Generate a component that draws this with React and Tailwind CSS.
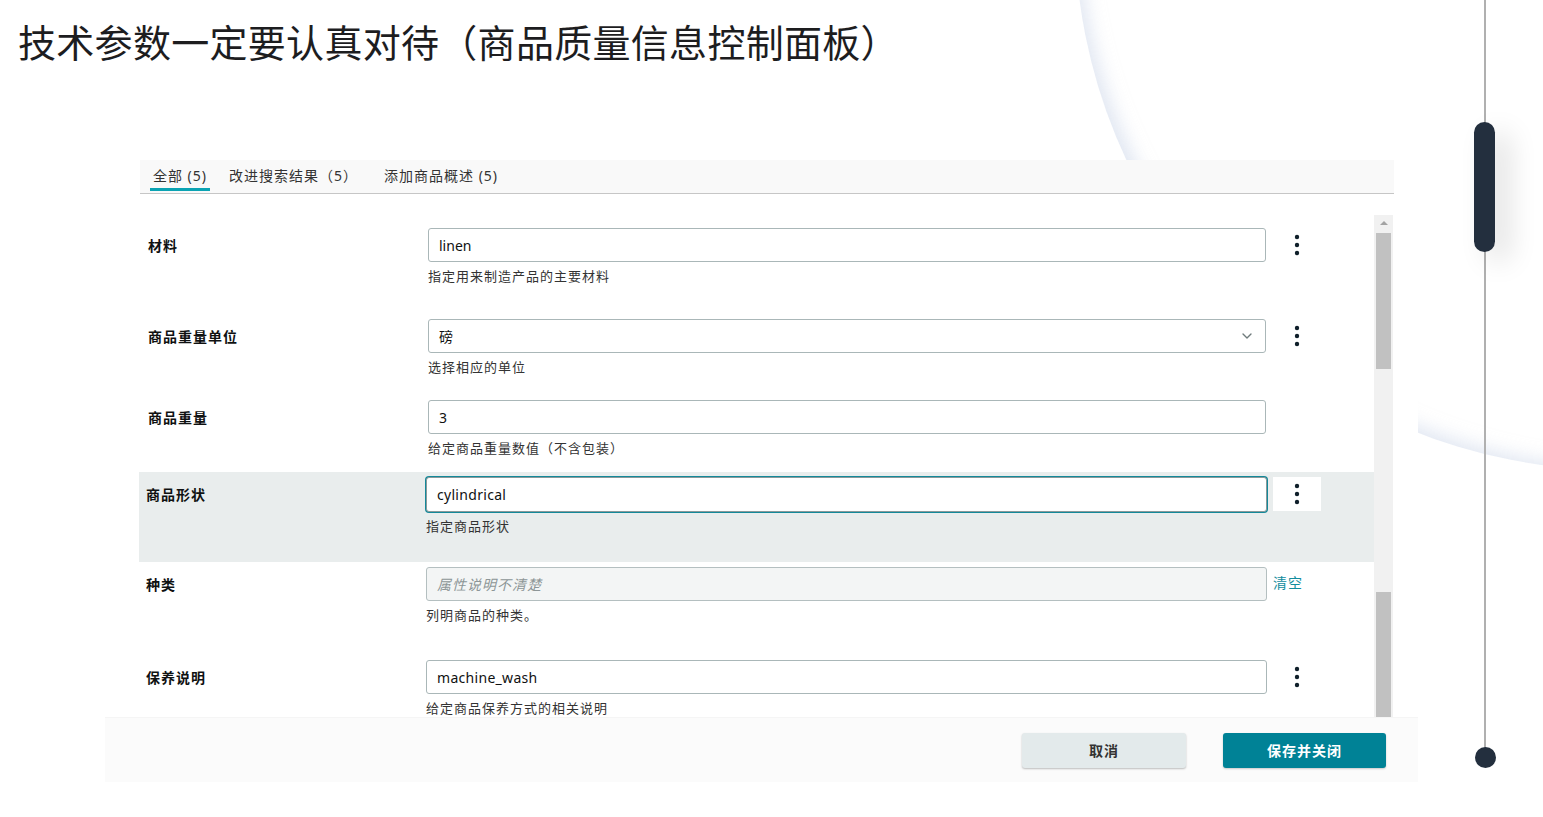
import { ChevronDown } from 'lucide-react';

const font = { fontFamily: '"Noto Sans", "Noto Sans CJK SC", sans-serif' };

function Kebab() {
  return (
    <svg width="6" height="22" viewBox="0 0 6 22" className="text-[#0f1f2a]">
      <circle cx="3" cy="3" r="2.2" fill="currentColor" />
      <circle cx="3" cy="11" r="2.2" fill="currentColor" />
      <circle cx="3" cy="19" r="2.2" fill="currentColor" />
    </svg>
  );
}

function Row({ label, help, height, shift, active, children, action }) {
  return (
    <div className={`flex items-start pt-[5px] ${height} ${active ? 'bg-[#e9eded]' : ''}`}>
      <div className={`h-[34px] flex items-center text-[14px] font-bold tracking-[1px] text-[#0f1111] ${shift ? 'w-[289px] pl-[9px]' : 'w-[287px] pl-[7px]'}`}>
        {label}
      </div>
      <div className={shift ? 'w-[838px]' : 'w-[841px]'}>
        {children}
        <div className="mt-[6px] text-[13px] leading-[16px] tracking-[1px] text-[#333]">{help}</div>
      </div>
      <div className={shift ? 'ml-[7px]' : 'ml-[6px]'}>{action}</div>
    </div>
  );
}

function KebabBox({ white }) {
  return (
    <div className={`w-[48px] h-[34px] flex items-center justify-center ${white ? 'bg-white' : ''}`}>
      <Kebab />
    </div>
  );
}

export default function App() {
  return (
    <div className="relative w-full h-[817px] overflow-hidden bg-white" style={font}>
      {/* background ring */}
      <div className="absolute left-[1075px] top-[-610px] w-[1090px] h-[1080px] rounded-full shadow-[inset_14px_-12px_18px_-10px_rgba(200,212,232,0.55)]" />

      {/* right slider decoration */}
      <div className="absolute left-[1484px] top-0 w-[2px] h-[757px] bg-[#b0b0b0]" />
      <div className="absolute left-[1474px] top-[122px] w-[21px] h-[130px] rounded-full bg-[#232f3e] shadow-[14px_10px_28px_rgba(0,0,0,0.13)]" />
      <div className="absolute left-[1475px] top-[747px] w-[21px] h-[21px] rounded-full bg-[#232f3e]" />

      <h1
        className="relative pt-[18px] pl-[18px] text-[38px] leading-[46px] tracking-[0.3px] text-[#1d1d1f] font-normal"
        style={{ fontFamily: '"Noto Sans CJK SC", "Noto Sans", sans-serif' }}
      >
        技术参数一定要认真对待（商品质量信息控制面板）
      </h1>

      <div className="relative mt-[96px] ml-[105px] w-[1313px] bg-white">
        {/* tabs */}
        <div className="ml-[35px] w-[1254px] h-[34px] bg-[#f9f9f9] border-b border-[#c6c6c6] flex text-[14px] tracking-[1px] text-[#333] whitespace-nowrap">
          <div className="relative ml-[10px] w-[60px] h-full flex items-center justify-center pb-[3px]">
            全部 (5)
            <div className="absolute left-0 right-0 bottom-[2px] h-[3px] bg-[#0ba3b3]" />
          </div>
          <div className="ml-[19px] w-[126px] h-full flex items-center pb-[3px]">改进搜索结果（5）</div>
          <div className="ml-[29px] h-full flex items-center pb-[3px]">添加商品概述 (5)</div>
        </div>

        {/* form area */}
        <div className="ml-[34px] w-[1254px] h-[523px] flex overflow-hidden">
          <div className="w-[1235px]">
            <div className="h-[29px]" />
            <Row label="材料" help="指定用来制造产品的主要材料" height="h-[91px]" shift action={<KebabBox />}>
              <div className="h-[34px] border border-[#aab7b8] rounded-[3px] flex items-center pl-[10px] text-[14px] text-[#0f1111]">linen</div>
            </Row>
            <Row label="商品重量单位" help="选择相应的单位" height="h-[81px]" shift action={<KebabBox />}>
              <div className="h-[34px] border border-[#aab7b8] rounded-[3px] flex items-center justify-between pl-[10px] pr-[10px] text-[14px] text-[#0f1111]">
                <span>磅</span>
                <ChevronDown size={16} className="text-[#6f7b7c]" />
              </div>
            </Row>
            <Row label="商品重量" help="给定商品重量数值（不含包装）" height="h-[77px]" shift>
              <div className="h-[34px] border border-[#aab7b8] rounded-[3px] flex items-center pl-[10px] text-[14px] text-[#0f1111]">3</div>
            </Row>
            <Row label="商品形状" help="指定商品形状" height="h-[90px]" active action={<KebabBox white />}>
              <div className="h-[35px] bg-white border border-[#8a999a] rounded-[3px] shadow-[0_0_0_1px_#13899a] flex items-center pl-[10px] text-[14px] tracking-[0.3px] text-[#0f1111]">cylindrical</div>
            </Row>
            <Row
              label="种类"
              help="列明商品的种类。"
              height="h-[93px]"
              action={<div className="h-[30px] flex items-center text-[14px] tracking-[1px] text-[#138d9e]">清空</div>}
            >
              <div className="h-[34px] bg-[#f3f5f5] border border-[#b4bfc0] rounded-[3px] flex items-center pl-[10px] text-[14px] italic tracking-[1px] text-[#8d9697]">属性说明不清楚</div>
            </Row>
            <Row label="保养说明" help="给定商品保养方式的相关说明" height="h-[92px]" action={<KebabBox />}>
              <div className="h-[34px] border border-[#aab7b8] rounded-[3px] flex items-center pl-[10px] text-[14px] tracking-[0.3px] text-[#0f1111]">machine_wash</div>
            </Row>
          </div>

          {/* scrollbar */}
          <div className="w-[19px] mt-[21px] bg-[#f1f1f1] flex flex-col items-center">
            <div className="h-[16px] flex items-center justify-center">
              <div className="w-0 h-0 border-l-[4px] border-r-[4px] border-b-[4px] border-l-transparent border-r-transparent border-b-[#a3a3a3]" />
            </div>
            <div className="mt-[2px] w-[15px] h-[136px] bg-[#c1c1c1]" />
            <div className="mt-[223px] w-[15px] flex-1 bg-[#c1c1c1]" />
          </div>
        </div>

        {/* footer */}
        <div className="h-[65px] bg-[#fbfbfb] border-t border-[#f5f5f5] flex justify-end items-start pt-[15px] pr-[32px] gap-[37px]">
          <button className="w-[164px] h-[35px] rounded-[3px] bg-[#e3eaeb] shadow-[0_1px_2px_rgba(0,0,0,0.25)] text-[14px] font-bold tracking-[1px] text-[#333]">
            取消
          </button>
          <button className="w-[163px] h-[35px] rounded-[3px] bg-[#008296] shadow-[0_1px_2px_rgba(0,0,0,0.2)] text-[14px] font-bold tracking-[1px] text-white">
            保存并关闭
          </button>
        </div>
      </div>
    </div>
  );
}
